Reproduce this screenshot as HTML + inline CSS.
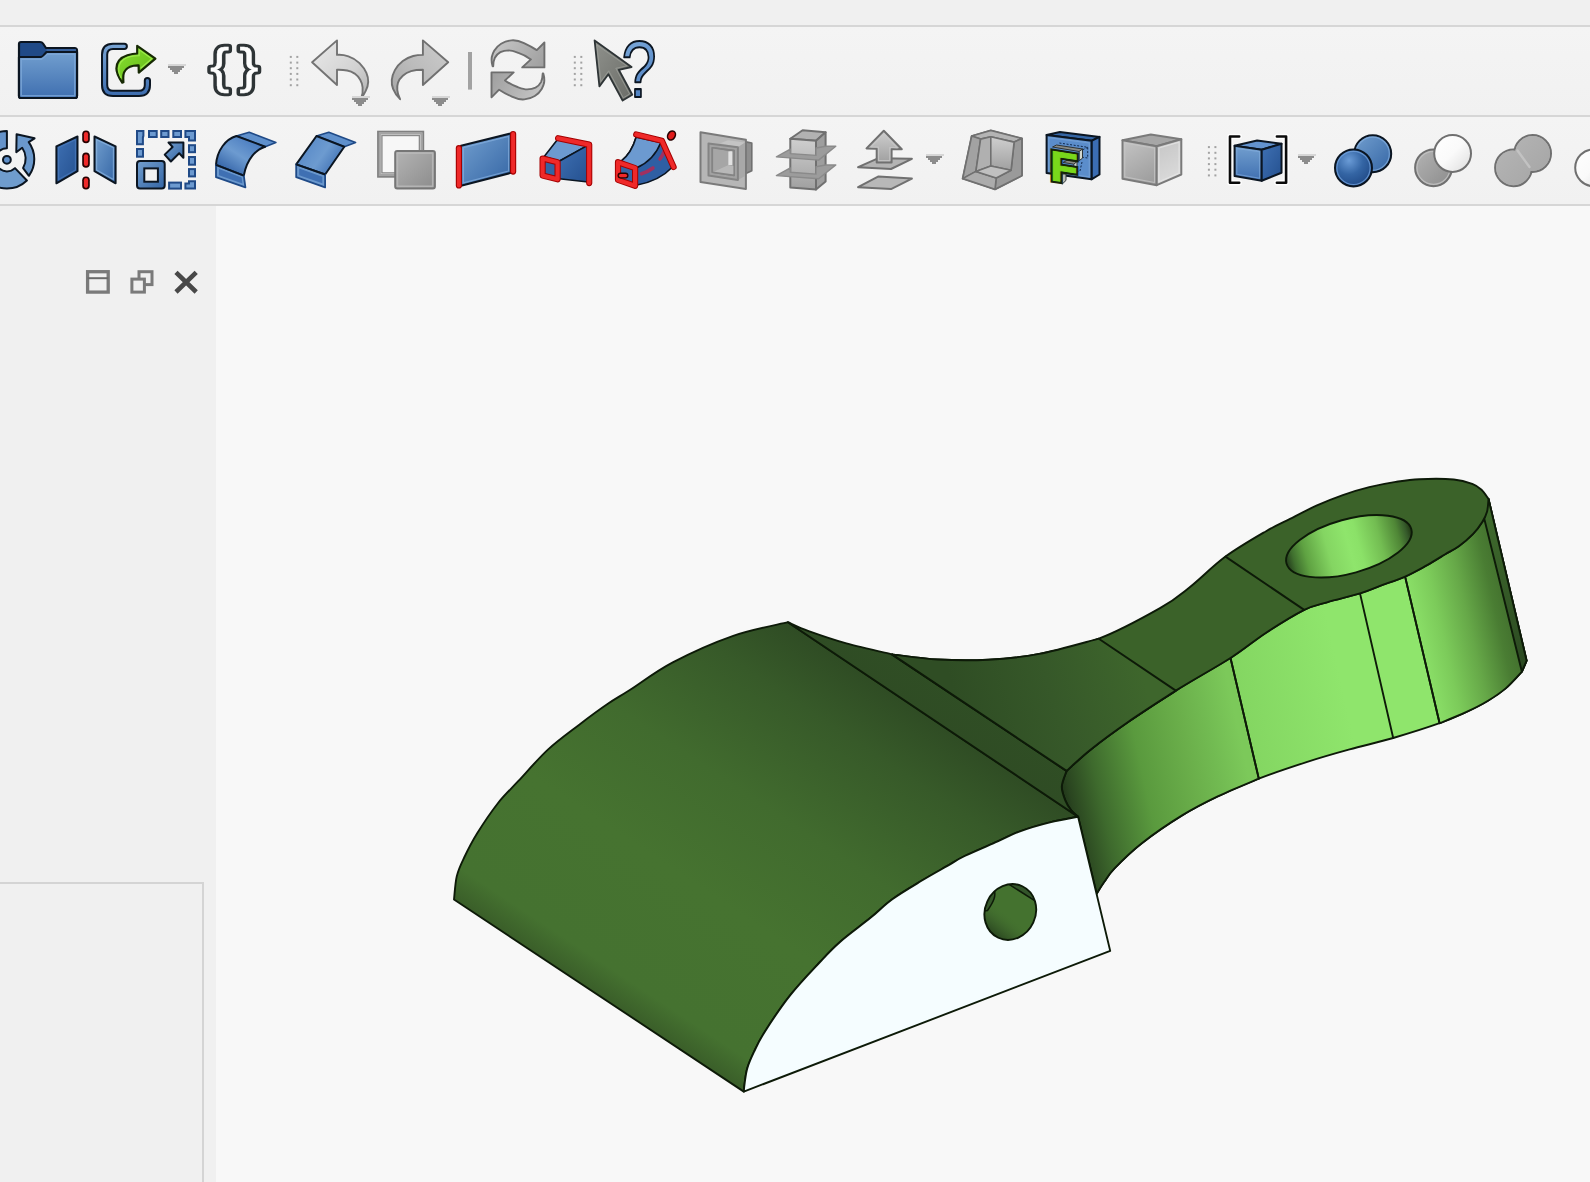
<!DOCTYPE html>
<html><head><meta charset="utf-8"><title>FreeCAD</title>
<style>
html,body{margin:0;padding:0;}
body{width:1590px;height:1182px;overflow:hidden;background:#f0f0f0;position:relative;font-family:"Liberation Sans",sans-serif;}
.abs{position:absolute;}
.hl{position:absolute;left:0;width:1590px;height:2px;background:#d6d6d6;}
#tb1{position:absolute;left:0;top:27px;width:1590px;height:88px;background:linear-gradient(#f4f4f4,#f1f1f1);}
#tb2{position:absolute;left:0;top:117px;width:1590px;height:87px;background:linear-gradient(#f4f4f4,#f1f1f1);}
#view{position:absolute;left:216px;top:206px;width:1374px;height:976px;background:#f8f8f8;}
#panel{position:absolute;left:0;top:206px;width:216px;height:976px;background:#f0f0f0;}
#box{position:absolute;left:-2px;top:882px;width:206px;height:320px;border:2px solid #d4d4d4;box-sizing:border-box;background:#f0f0f0;}
svg{position:absolute;overflow:visible;}
.ic{position:absolute;width:64px;height:64px;}
</style></head>
<body>
<div class="hl" style="top:25px"></div>
<div id="tb1"></div>
<div class="hl" style="top:115px"></div>
<div id="tb2"></div>
<div class="hl" style="top:204px"></div>
<div id="panel"></div>
<div id="box"></div>
<div id="view"></div>
<svg width="1590" height="1182" viewBox="0 0 1590 1182" style="left:0;top:0">
<defs>
<linearGradient id="gbig" gradientUnits="userSpaceOnUse" x1="600" y1="996" x2="830.1" y2="649.9">
<stop offset="0" stop-color="#3a5e29"/><stop offset="0.07" stop-color="#457230"/><stop offset="0.35" stop-color="#467330"/><stop offset="0.6" stop-color="#416b2e"/><stop offset="0.85" stop-color="#375a29"/><stop offset="1" stop-color="#2f4c24"/></linearGradient>
<linearGradient id="gstrip" gradientUnits="userSpaceOnUse" x1="900" y1="700" x2="930" y2="655">
<stop offset="0" stop-color="#2f4c24"/><stop offset="1" stop-color="#304f25"/></linearGradient>
<linearGradient id="garm" gradientUnits="userSpaceOnUse" x1="960" y1="715" x2="1140" y2="665">
<stop offset="0" stop-color="#2f4d24"/><stop offset="0.5" stop-color="#365829"/><stop offset="1" stop-color="#3e662c"/></linearGradient>
<linearGradient id="gside1" gradientUnits="userSpaceOnUse" x1="1062" y1="800" x2="1245" y2="760">
<stop offset="0" stop-color="#1f3318"/><stop offset="0.05" stop-color="#2a4520"/><stop offset="0.2" stop-color="#3e6a2d"/><stop offset="0.45" stop-color="#5a9a3e"/><stop offset="0.7" stop-color="#6aae4a"/><stop offset="0.85" stop-color="#72bb52"/><stop offset="1" stop-color="#7cc95a"/></linearGradient>
<linearGradient id="gside2" gradientUnits="userSpaceOnUse" x1="1232" y1="700" x2="1340" y2="676"><stop offset="0" stop-color="#83d561"/><stop offset="1" stop-color="#8fe56c"/></linearGradient>
<linearGradient id="gside3" gradientUnits="userSpaceOnUse" x1="1415" y1="640" x2="1525" y2="615">
<stop offset="0" stop-color="#8de36a"/><stop offset="0.25" stop-color="#7ccb5a"/><stop offset="0.5" stop-color="#66a848"/><stop offset="0.75" stop-color="#4a7d33"/><stop offset="1" stop-color="#3c6529"/></linearGradient>
<linearGradient id="ghole" gradientUnits="userSpaceOnUse" x1="1286" y1="546" x2="1412" y2="546">
<stop offset="0" stop-color="#2a4720"/><stop offset="0.05" stop-color="#3f6f2e"/><stop offset="0.15" stop-color="#5fa242"/><stop offset="0.33" stop-color="#84d562"/><stop offset="0.5" stop-color="#8fe56c"/><stop offset="0.58" stop-color="#8be168"/><stop offset="0.75" stop-color="#73bd52"/><stop offset="0.9" stop-color="#4f8636"/><stop offset="0.97" stop-color="#35592a"/><stop offset="1" stop-color="#264019"/></linearGradient>
<linearGradient id="gsliver" gradientUnits="userSpaceOnUse" x1="1490" y1="510" x2="1524" y2="665"><stop offset="0" stop-color="#3f6b2d"/><stop offset="1" stop-color="#2c4a22"/></linearGradient>
<linearGradient id="ghole2" gradientUnits="userSpaceOnUse" x1="992" y1="934" x2="1008" y2="914">
<stop offset="0" stop-color="#2a4620"/><stop offset="0.5" stop-color="#3a602a" stop-opacity="0.7"/><stop offset="1" stop-color="#44722f" stop-opacity="0"/></linearGradient>
</defs>
<path d="M1066.6 770.9 C1070.6 767.3 1080.4 757.6 1090.8 749.4 C1101.2 741.2 1114.6 731.3 1128.8 721.5 C1143.0 711.7 1158.8 701.2 1175.8 690.6 C1192.8 680.0 1215.5 667.6 1230.5 658.0 C1245.5 648.4 1253.8 640.7 1266.1 632.7 C1278.4 624.7 1294.0 615.0 1304.2 609.9 C1314.4 604.8 1317.7 605.0 1327.0 602.3 C1336.3 599.5 1351.2 596.1 1360.0 593.4 C1368.8 590.7 1372.5 588.7 1380.0 585.9 C1387.5 583.1 1397.3 580.0 1405.1 576.6 C1412.9 573.2 1419.9 569.1 1426.6 565.4 C1433.3 561.7 1439.8 557.5 1445.2 554.2 C1450.6 551.0 1454.4 549.3 1459.1 545.9 C1463.8 542.5 1469.2 537.8 1473.1 533.8 C1477.0 529.8 1480.1 525.4 1482.4 521.7 C1484.7 518.0 1486.1 515.2 1487.1 511.4 C1488.1 507.6 1488.3 501.1 1488.5 499.0 L1526.6 660.7 L1521.9 671.7 C1519.2 674.5 1511.4 683.5 1505.7 688.4 C1500.0 693.2 1494.6 696.8 1488.0 700.8 C1481.4 704.8 1474.1 708.5 1466.0 712.2 C1457.9 715.9 1451.7 718.9 1439.6 723.2 C1427.5 727.5 1408.2 733.6 1393.2 738.0 C1378.2 742.4 1364.0 745.4 1349.6 749.4 C1335.1 753.4 1321.6 757.2 1306.5 762.1 C1291.4 767.0 1273.6 772.9 1258.8 778.6 C1244.0 784.3 1230.5 790.3 1217.7 796.4 C1204.9 802.5 1194.8 807.6 1182.1 815.4 C1169.4 823.2 1152.8 834.6 1141.5 843.4 C1130.2 852.2 1120.7 861.9 1114.5 868.3 C1108.3 874.7 1107.3 877.6 1104.3 881.8 C1101.3 886.0 1098.0 891.7 1096.7 893.7 L1078.1 816.7 C1076.9 815.6 1073.1 812.7 1071.0 810.0 C1068.9 807.3 1066.9 804.5 1065.4 800.6 C1063.9 796.7 1061.6 791.5 1061.8 786.5 C1062.0 781.5 1065.8 773.5 1066.6 770.9Z" fill="url(#gside2)" stroke="#0d1a08" stroke-width="1.9" stroke-linejoin="round" stroke-linecap="round"/>
<path d="M1066.6 770.9 C1070.6 767.3 1080.4 757.6 1090.8 749.4 C1101.2 741.2 1114.6 731.3 1128.8 721.5 C1143.0 711.7 1158.8 701.2 1175.8 690.6 C1192.8 680.0 1221.4 663.4 1230.5 658.0 L1258.8 778.6 C1252.0 781.6 1230.5 790.3 1217.7 796.4 C1204.9 802.5 1194.8 807.6 1182.1 815.4 C1169.4 823.2 1152.8 834.6 1141.5 843.4 C1130.2 852.2 1120.7 861.9 1114.5 868.3 C1108.3 874.7 1107.3 877.6 1104.3 881.8 C1101.3 886.0 1098.0 891.7 1096.7 893.7 L1078.1 816.7 C1076.9 815.6 1073.1 812.7 1071.0 810.0 C1068.9 807.3 1066.9 804.5 1065.4 800.6 C1063.9 796.7 1061.6 791.5 1061.8 786.5 C1062.0 781.5 1065.8 773.5 1066.6 770.9Z" fill="url(#gside1)" stroke="#0d1a08" stroke-width="1.9" stroke-linejoin="round" stroke-linecap="round"/>
<path d="M1405.1 576.6 C1408.7 574.7 1419.9 569.1 1426.6 565.4 C1433.3 561.7 1439.8 557.5 1445.2 554.2 C1450.6 551.0 1454.4 549.3 1459.1 545.9 C1463.8 542.5 1469.2 537.8 1473.1 533.8 C1477.0 529.8 1480.1 525.4 1482.4 521.7 C1484.7 518.0 1486.1 515.2 1487.1 511.4 C1488.1 507.6 1488.3 501.1 1488.5 499.0 L1526.6 660.7 L1521.9 671.7 C1519.2 674.5 1511.4 683.5 1505.7 688.4 C1500.0 693.2 1494.6 696.8 1488.0 700.8 C1481.4 704.8 1474.1 708.5 1466.0 712.2 C1457.9 715.9 1444.0 721.4 1439.6 723.2Z" fill="url(#gside3)" stroke="#0d1a08" stroke-width="1.9" stroke-linejoin="round" stroke-linecap="round"/>
<path d="M1488.5 499.0L1526.6 660.7L1521.9 671.7L1484.2 518.6Z" fill="url(#gsliver)" stroke="#0d1a08" stroke-width="1.9" stroke-linejoin="round" stroke-linecap="round"/>
<path d="M1230.5 658.0L1258.8 778.6" fill="none" stroke="#0d1a08" stroke-width="1.9" stroke-linejoin="round" stroke-linecap="round"/>
<path d="M1360.0 593.4L1393.2 738.0" fill="none" stroke="#0d1a08" stroke-width="1.9" stroke-linejoin="round" stroke-linecap="round"/>
<path d="M1405.1 576.6L1439.6 723.2" fill="none" stroke="#0d1a08" stroke-width="1.9" stroke-linejoin="round" stroke-linecap="round"/>
<path d="M454.0 899.5 C454.5 895.6 455.1 883.1 456.8 876.1 C458.5 869.1 460.8 864.6 464.2 857.5 C467.6 850.4 471.6 842.3 477.2 833.3 C482.8 824.3 490.9 812.2 497.7 803.5 C504.5 794.8 509.8 790.2 518.2 781.2 C526.6 772.2 537.7 759.1 547.9 749.6 C558.1 740.1 569.7 732.0 579.6 724.4 C589.5 716.8 599.1 709.7 607.5 704.0 C615.9 698.3 618.9 697.0 629.8 690.0 C640.7 683.0 655.6 671.3 672.8 662.3 C690.0 653.3 714.0 642.5 733.2 635.8 C752.4 629.1 778.8 624.5 787.9 622.2 L1078.1 816.7 C1073.4 817.6 1059.7 819.9 1050.0 822.3 C1040.3 824.7 1028.7 828.1 1020.0 831.3 C1011.3 834.5 1006.9 837.3 997.7 841.4 C988.5 845.5 973.2 851.9 964.7 856.0 C956.2 860.1 954.1 862.1 946.9 866.2 C939.7 870.3 930.6 875.3 921.5 880.8 C912.4 886.3 900.8 893.1 892.3 899.2 C883.8 905.3 879.5 910.5 870.8 917.6 C862.1 924.7 848.8 934.3 840.3 941.7 C831.8 949.1 828.3 953.1 820.0 962.0 C811.7 970.9 799.5 983.5 790.3 995.1 C781.1 1006.7 771.0 1022.0 765.0 1031.4 C759.0 1040.8 757.0 1045.6 754.1 1051.7 C751.2 1057.8 749.0 1062.7 747.4 1067.9 C745.8 1073.1 745.3 1078.8 744.7 1082.8 C744.1 1086.8 743.9 1090.1 743.8 1091.6Z" fill="url(#gbig)" stroke="#0d1a08" stroke-width="1.9" stroke-linejoin="round" stroke-linecap="round"/>
<path d="M787.9 622.2 C791.4 623.7 799.0 627.6 808.7 631.1 C818.5 634.6 832.5 639.5 846.4 643.4 C860.3 647.3 884.4 652.6 892.0 654.4 L1066.6 770.9 C1065.8 773.5 1062.0 781.5 1061.8 786.5 C1061.6 791.5 1063.9 796.7 1065.4 800.6 C1066.9 804.5 1068.9 807.3 1071.0 810.0 C1073.1 812.7 1076.9 815.6 1078.1 816.7Z" fill="url(#gstrip)" stroke="#0d1a08" stroke-width="1.9" stroke-linejoin="round" stroke-linecap="round"/>
<path d="M892.0 654.4 C899.6 655.2 921.6 658.6 937.7 659.5 C953.8 660.4 971.5 660.6 988.4 659.7 C1005.3 658.8 1020.8 657.4 1039.2 653.9 C1057.6 650.4 1078.7 646.3 1098.8 638.7 C1118.9 631.1 1144.8 616.8 1160.0 608.2 C1175.2 599.6 1179.1 595.6 1190.0 587.0 C1200.9 578.4 1212.8 565.9 1225.5 556.6 C1238.2 547.3 1255.3 537.5 1266.1 531.2 C1276.8 524.9 1281.6 523.1 1290.0 518.9 C1298.4 514.6 1307.6 509.7 1316.4 505.7 C1325.2 501.7 1334.0 498.2 1342.8 495.1 C1351.6 492.0 1360.4 489.4 1369.2 487.2 C1378.0 485.0 1387.3 483.2 1395.7 481.9 C1404.1 480.6 1409.7 479.6 1419.4 479.2 C1429.1 478.8 1445.0 478.7 1453.8 479.5 C1462.6 480.3 1467.7 482.2 1472.3 483.9 C1476.9 485.6 1478.8 487.3 1481.5 489.8 C1484.2 492.3 1487.3 497.5 1488.5 499.0 C1488.3 501.1 1488.1 507.6 1487.1 511.4 C1486.1 515.2 1484.7 518.0 1482.4 521.7 C1480.1 525.4 1477.0 529.8 1473.1 533.8 C1469.2 537.8 1463.8 542.5 1459.1 545.9 C1454.4 549.3 1450.6 551.0 1445.2 554.2 C1439.8 557.5 1433.3 561.7 1426.6 565.4 C1419.9 569.1 1412.9 573.2 1405.1 576.6 C1397.3 580.0 1387.5 583.1 1380.0 585.9 C1372.5 588.7 1368.8 590.7 1360.0 593.4 C1351.2 596.1 1336.3 599.5 1327.0 602.3 C1317.7 605.0 1314.4 604.8 1304.2 609.9 C1294.0 615.0 1278.4 624.7 1266.1 632.7 C1253.8 640.7 1245.5 648.4 1230.5 658.0 C1215.5 667.6 1192.8 680.0 1175.8 690.6 C1158.8 701.2 1143.0 711.7 1128.8 721.5 C1114.6 731.3 1101.2 741.2 1090.8 749.4 C1080.4 757.6 1070.6 767.3 1066.6 770.9Z" fill="#3b6229" stroke="#0d1a08" stroke-width="1.9" stroke-linejoin="round" stroke-linecap="round"/>
<path d="M892.0 654.4 C899.6 655.2 921.6 658.6 937.7 659.5 C953.8 660.4 971.5 660.6 988.4 659.7 C1005.3 658.8 1020.8 657.4 1039.2 653.9 C1057.6 650.4 1088.9 641.2 1098.8 638.7 L1175.8 690.6 C1168.0 695.8 1143.0 711.7 1128.8 721.5 C1114.6 731.3 1101.2 741.2 1090.8 749.4 C1080.4 757.6 1070.6 767.3 1066.6 770.9Z" fill="url(#garm)" stroke="#0d1a08" stroke-width="1.9" stroke-linejoin="round" stroke-linecap="round"/>
<path d="M1225.5 556.6L1304.2 609.9" fill="none" stroke="#0d1a08" stroke-width="1.9" stroke-linejoin="round" stroke-linecap="round"/>
<ellipse cx="1348.9" cy="546.3" rx="64.7" ry="27" transform="rotate(-15.4 1348.9 546.3)" fill="url(#ghole)" stroke="#0d1a08" stroke-width="1.9" stroke-linejoin="round" stroke-linecap="round"/>
<path d="M743.8 1091.6 C743.9 1090.1 744.1 1086.8 744.7 1082.8 C745.3 1078.8 745.8 1073.1 747.4 1067.9 C749.0 1062.7 751.2 1057.8 754.1 1051.7 C757.0 1045.6 759.0 1040.8 765.0 1031.4 C771.0 1022.0 781.1 1006.7 790.3 995.1 C799.5 983.5 811.7 970.9 820.0 962.0 C828.3 953.1 831.8 949.1 840.3 941.7 C848.8 934.3 862.1 924.7 870.8 917.6 C879.5 910.5 883.8 905.3 892.3 899.2 C900.8 893.1 912.4 886.3 921.5 880.8 C930.6 875.3 939.7 870.3 946.9 866.2 C954.1 862.1 956.2 860.1 964.7 856.0 C973.2 851.9 988.5 845.5 997.7 841.4 C1006.9 837.3 1011.3 834.5 1020.0 831.3 C1028.7 828.1 1040.3 824.7 1050.0 822.3 C1059.7 819.9 1073.4 817.6 1078.1 816.7 L1110.2 950.9Z" fill="#f5fdff" stroke="#0d1a08" stroke-width="1.9" stroke-linejoin="round" stroke-linecap="round"/>
<defs><clipPath id="ch2"><ellipse cx="1010.3" cy="912" rx="25.3" ry="28.4" transform="rotate(25 1010.3 912)"/></clipPath></defs>
<ellipse cx="1010.3" cy="912" rx="25.3" ry="28.4" transform="rotate(25 1010.3 912)" fill="#44722f"/>
<g clip-path="url(#ch2)">
<rect x="980" y="880" width="60" height="64" fill="url(#ghole2)"/>
<path d="M994.3 890 C996 896 994 901 987.5 910.5 L975 912 L980 880Z" fill="#35582a" stroke="#0d1a08" stroke-width="1.5"/>
<path d="M1009.5 884.6 L1035.5 901.2 L1045 880 L1012 872Z" fill="#33552a" stroke="#0d1a08" stroke-width="1.5"/>
</g>
<ellipse cx="1010.3" cy="912" rx="25.3" ry="28.4" transform="rotate(25 1010.3 912)" fill="none" stroke="#0d1a08" stroke-width="1.9" stroke-linejoin="round" stroke-linecap="round"/>
</svg>
<svg width="1590" height="1182" viewBox="0 0 1590 1182" style="left:0;top:0">
<defs>
<linearGradient id="bv" x1="0" y1="0" x2="0" y2="1"><stop offset="0" stop-color="#729fcf"/><stop offset="1" stop-color="#3f6fb0"/></linearGradient>
<linearGradient id="bd" x1="0" y1="0" x2="1" y2="1"><stop offset="0" stop-color="#729fcf"/><stop offset="1" stop-color="#3465a4"/></linearGradient>
<linearGradient id="bdd" x1="0" y1="0" x2="1" y2="1"><stop offset="0" stop-color="#3f71b4"/><stop offset="1" stop-color="#24508f"/></linearGradient>
<linearGradient id="gv" x1="0" y1="0" x2="0" y2="1"><stop offset="0" stop-color="#cfcfcf"/><stop offset="1" stop-color="#a0a0a0"/></linearGradient>
<linearGradient id="gd" x1="0" y1="0" x2="1" y2="1"><stop offset="0" stop-color="#b4b4b4"/><stop offset="1" stop-color="#8c8c8c"/></linearGradient>
<linearGradient id="gl" x1="0" y1="0" x2="1" y2="1"><stop offset="0" stop-color="#e6e6e6"/><stop offset="1" stop-color="#c2c2c2"/></linearGradient>
<linearGradient id="gw" x1="0" y1="0" x2="1" y2="1"><stop offset="0" stop-color="#ffffff"/><stop offset="0.5" stop-color="#fafafa"/><stop offset="1" stop-color="#dcdcdc"/></linearGradient>
<linearGradient id="grn" x1="0" y1="0" x2="1" y2="1"><stop offset="0" stop-color="#8ae234"/><stop offset="1" stop-color="#5fb512"/></linearGradient>
<linearGradient id="red" x1="0" y1="0" x2="1" y2="0"><stop offset="0" stop-color="#ef2929"/><stop offset="1" stop-color="#d81313"/></linearGradient>
<radialGradient id="sph" cx="0.38" cy="0.3" r="0.75"><stop offset="0" stop-color="#6a9bd6"/><stop offset="0.5" stop-color="#3465a4"/><stop offset="1" stop-color="#1f4885"/></radialGradient>
<linearGradient id="cur" x1="0" y1="0" x2="1" y2="1"><stop offset="0" stop-color="#8f918c"/><stop offset="1" stop-color="#6a6c67"/></linearGradient>
</defs>
<g transform="translate(16,38)">
<path d="M3 6 Q3 4 5 4 L24 4 Q26 4 27 5.5 L30 10 L58.5 10 Q61 10 61 12.5 L61 58 Q61 60 59 60 L5 60 Q3 60 3 58Z" fill="#204a87" stroke="#0b1521" stroke-width="2.2" stroke-linejoin="round"/>
<path d="M3 19 L24.5 19 Q26 19 27 18 L30.5 14 L61 14 L61 58 Q61 60 59 60 L5 60 Q3 60 3 58Z" fill="url(#bv)" stroke="#0b1521" stroke-width="2.2" stroke-linejoin="round"/>
<path d="M5.2 21.2 L25.5 21.2 L31.3 16.2 L58.8 16.2 L58.8 57.8 L5.2 57.8Z" fill="none" stroke="#7fa9da" stroke-width="1.6" opacity="0.75"/>
<path d="M30.5 12 L60 12" stroke="#3f68a3" stroke-width="1.6"/>
</g>
<path d="M124.3 46.3 L113 46.3 Q104.6 46.3 104.6 54.7 L104.6 84.9 Q104.6 93.3 113 93.3 L139 93.3 Q147.4 93.3 147.4 84.9 L147.4 80.6" fill="none" stroke="#0b1521" stroke-width="7.2" stroke-linecap="round"/>
<path d="M124.3 46.3 L113 46.3 Q104.6 46.3 104.6 54.7 L104.6 84.9 Q104.6 93.3 113 93.3 L139 93.3 Q147.4 93.3 147.4 84.9 L147.4 80.6" fill="none" stroke="url(#bvu)" stroke-width="3.2" stroke-linecap="round"/>
<defs><linearGradient id="bvu" gradientUnits="userSpaceOnUse" x1="0" y1="44" x2="0" y2="96"><stop offset="0" stop-color="#78a4d4"/><stop offset="1" stop-color="#3c6cae"/></linearGradient></defs>
<path d="M122.2 82.6 C118.5 77 116.3 73 116.4 68.5 C116.6 62 120.5 57.5 127.4 55.3 C131 54.2 134 53.6 137.2 53.5 L137.2 45.8 L155.4 58.7 L138.8 72.6 L138.6 65.4 C135 65.3 132.5 65.7 130 66.8 C126 68.6 124 71 123.4 75 C123.1 77.5 123.3 80 123.4 82.2Z" fill="url(#grn)" stroke="#172a04" stroke-width="2.2" stroke-linejoin="round"/>
<path d="M121 78 C118.6 73.5 118.2 69.5 119.2 65.5 C120.6 61 124.5 58 130 56.6 C133 55.9 136 55.6 139.2 55.6 L139.2 49.8 L151.8 58.7 L140.6 68.2" fill="none" stroke="#a5ef55" stroke-width="1.2" opacity="0.8"/>
<rect x="168" y="64" width="18" height="2" fill="#d6d6d6"/><rect x="168" y="66" width="16" height="2" fill="#8c8c8c"/><rect x="170" y="68" width="12" height="2" fill="#8c8c8c"/><rect x="172" y="70" width="8" height="2" fill="#8c8c8c"/><rect x="174" y="72" width="4" height="2" fill="#8c8c8c"/>
<g font-family="Liberation Sans, sans-serif" font-size="58" text-anchor="middle" transform="translate(0,6.12) scale(1,0.8675)"><title>{}</title>
<text x="219.6" y="88.6" fill="#2e3436" stroke="#2e3436" stroke-width="7.4" stroke-linejoin="round">{</text>
<text x="248.9" y="88.6" fill="#2e3436" stroke="#2e3436" stroke-width="7.4" stroke-linejoin="round">}</text>
<text x="219.6" y="88.6" fill="#fdfdfd" stroke="#fdfdfd" stroke-width="0.4">{</text>
<text x="248.9" y="88.6" fill="#fdfdfd" stroke="#fdfdfd" stroke-width="0.4">}</text>
</g>
<rect x="289.8" y="55.9" width="2" height="2" fill="#a2a2a2"/><rect x="296.3" y="55.9" width="2" height="2" fill="#a2a2a2"/><rect x="289.8" y="61.6" width="2" height="2" fill="#a2a2a2"/><rect x="296.3" y="61.6" width="2" height="2" fill="#a2a2a2"/><rect x="289.8" y="67.2" width="2" height="2" fill="#a2a2a2"/><rect x="296.3" y="67.2" width="2" height="2" fill="#a2a2a2"/><rect x="289.8" y="72.9" width="2" height="2" fill="#a2a2a2"/><rect x="296.3" y="72.9" width="2" height="2" fill="#a2a2a2"/><rect x="289.8" y="78.5" width="2" height="2" fill="#a2a2a2"/><rect x="296.3" y="78.5" width="2" height="2" fill="#a2a2a2"/><rect x="289.8" y="84.2" width="2" height="2" fill="#a2a2a2"/><rect x="296.3" y="84.2" width="2" height="2" fill="#a2a2a2"/>
<path d="M312.1 62.2 L337 40.4 L337 54.9 C341 54.6 345 55.2 348.4 56.3 C353 57.8 356.6 60.2 359.5 63.2 C362.6 66.4 365 69.6 366.4 72.9 C367.8 76.2 368.3 79 368.2 81.9 C368.1 85 367.2 88 365.7 90.9 C364.5 93.5 363 96 361.2 98.2 C362.6 94.5 363 91 362.6 87.4 C362.3 84.5 361.6 82.2 360.2 79.8 C358.8 77.4 357 75.3 354.7 73.6 C352.4 72 350 71 347.1 70.5 C344 69.9 340.5 69.7 337 69.8 L337 85Z" fill="url(#ugr)" stroke="#737373" stroke-width="1.9" stroke-linejoin="round"/>
<defs><linearGradient id="ugr" gradientUnits="userSpaceOnUse" x1="320" y1="45" x2="368" y2="95"><stop offset="0" stop-color="#e6e6e6"/><stop offset="0.6" stop-color="#d2d2d2"/><stop offset="1" stop-color="#b4b4b4"/></linearGradient><linearGradient id="rgr" gradientUnits="userSpaceOnUse" x1="392" y1="95" x2="445" y2="45"><stop offset="0" stop-color="#a8a8a8"/><stop offset="0.5" stop-color="#bcbcbc"/><stop offset="1" stop-color="#cacaca"/></linearGradient></defs>
<rect x="352" y="96" width="18" height="2" fill="#d6d6d6"/><rect x="352" y="98" width="16" height="2" fill="#8c8c8c"/><rect x="354" y="100" width="12" height="2" fill="#8c8c8c"/><rect x="356" y="102" width="8" height="2" fill="#8c8c8c"/><rect x="358" y="104" width="4" height="2" fill="#8c8c8c"/>
<path d="M448.2 62.2 L422.9 40.4 L422.9 54.9 C419.5 54.9 416.2 55.2 413.2 56 C409.2 57 405.8 58.8 402.8 61.1 C399.4 63.8 396.8 66.6 394.9 70.1 C393.2 73.2 392.1 76.4 391.8 79.8 C391.5 83 392 86 393.1 88.8 C394.6 92.6 397 96 400.1 99.2 C398.4 96 397.6 93.2 397.3 90.2 C397 87.5 397.2 85 398 82.6 C398.9 80 400.5 77.8 402.8 75.7 C405.2 73.6 407.9 72.2 411.1 71.2 C414.7 70.1 418.6 69.8 422.9 69.8 L422.9 85Z" fill="url(#rgr)" stroke="#707070" stroke-width="1.9" stroke-linejoin="round"/>
<rect x="432" y="96" width="18" height="2" fill="#d6d6d6"/><rect x="432" y="98" width="16" height="2" fill="#8c8c8c"/><rect x="434" y="100" width="12" height="2" fill="#8c8c8c"/><rect x="436" y="102" width="8" height="2" fill="#8c8c8c"/><rect x="438" y="104" width="4" height="2" fill="#8c8c8c"/>
<rect x="468" y="52" width="4" height="37.6" fill="#a2a2a2"/>
<path d="M492.6 66.3 C491.4 62.5 491.4 59.8 491.8 57 C492.3 54.5 493.1 52.7 494.2 50.8 C495.8 48 498.2 45.6 501.1 43.8 C504.2 41.9 507.6 40.7 511.5 40.4 C515.8 40 520 41.2 524 43.1 C528.5 45.2 532.8 47.5 536.8 50.1 L544.4 42.5 L544.4 67.4 L522.2 67.4 L530.9 59.4 C527 56.5 523 54.3 518.4 52.8 C515.2 51.7 512 50.5 508.8 50.4 C505.8 50.4 503 50.8 500.4 52.1 C498 53.4 496.2 55.3 494.9 57.7 C493.7 60.2 493.3 63 493.2 66.3Z" fill="url(#fgr)" stroke="#6e6e6e" stroke-width="1.9" stroke-linejoin="round"/>
<path d="M492.6 66.3 C491.4 62.5 491.4 59.8 491.8 57 C492.3 54.5 493.1 52.7 494.2 50.8 C495.8 48 498.2 45.6 501.1 43.8 C504.2 41.9 507.6 40.7 511.5 40.4 C515.8 40 520 41.2 524 43.1 C528.5 45.2 532.8 47.5 536.8 50.1 L544.4 42.5 L544.4 67.4 L522.2 67.4 L530.9 59.4 C527 56.5 523 54.3 518.4 52.8 C515.2 51.7 512 50.5 508.8 50.4 C505.8 50.4 503 50.8 500.4 52.1 C498 53.4 496.2 55.3 494.9 57.7 C493.7 60.2 493.3 63 493.2 66.3Z" fill="url(#fgr)" stroke="#6e6e6e" stroke-width="1.9" stroke-linejoin="round" transform="rotate(180 517.95 69.9)"/>
<defs><linearGradient id="fgr" gradientUnits="userSpaceOnUse" x1="495" y1="42" x2="540" y2="70"><stop offset="0" stop-color="#c6c6c6"/><stop offset="1" stop-color="#a0a0a0"/></linearGradient></defs>
<rect x="573.8" y="55.9" width="2" height="2" fill="#a2a2a2"/><rect x="580.3" y="55.9" width="2" height="2" fill="#a2a2a2"/><rect x="573.8" y="61.6" width="2" height="2" fill="#a2a2a2"/><rect x="580.3" y="61.6" width="2" height="2" fill="#a2a2a2"/><rect x="573.8" y="67.2" width="2" height="2" fill="#a2a2a2"/><rect x="580.3" y="67.2" width="2" height="2" fill="#a2a2a2"/><rect x="573.8" y="72.9" width="2" height="2" fill="#a2a2a2"/><rect x="580.3" y="72.9" width="2" height="2" fill="#a2a2a2"/><rect x="573.8" y="78.5" width="2" height="2" fill="#a2a2a2"/><rect x="580.3" y="78.5" width="2" height="2" fill="#a2a2a2"/><rect x="573.8" y="84.2" width="2" height="2" fill="#a2a2a2"/><rect x="580.3" y="84.2" width="2" height="2" fill="#a2a2a2"/>
<path d="M594.6 40.4 L599.4 86.4 L608.4 74.3 L622.6 100.6 L632.3 94.7 L618.8 69.8 L631.6 67.0Z" fill="url(#cur)" stroke="#2e3436" stroke-width="1.8" stroke-linejoin="round"/>
<path d="M596.8 45 L600.9 81.5 L608.7 70.8 L623.3 97.8 L629.6 94 L615.8 68.3 L626.8 65.9Z" fill="none" stroke="#a0a29d" stroke-width="1" opacity="0.7"/>
<g font-family="Liberation Sans, sans-serif" font-size="65.5" text-anchor="middle" transform="translate(639.1,97.3) scale(0.96,1.215)"><title>?</title>
<text x="0" y="0" fill="url(#qgr)" stroke="#0b1521" stroke-width="1.8" stroke-linejoin="round">?</text>
</g>
<defs><linearGradient id="qgr" gradientUnits="userSpaceOnUse" x1="-12" y1="-45" x2="12" y2="0"><stop offset="0" stop-color="#78a6d8"/><stop offset="1" stop-color="#4a7dc0"/></linearGradient></defs>
<path d="M15.0 168.1 L26.9 180.5 A28.8 28.8 0 0 1 -13.1 180.5 L-1.2 168.1 A11.6 11.6 0 0 0 15.0 168.1 Z" fill="#6f9ccd" stroke="#0b1521" stroke-width="2" stroke-linejoin="round"/>
<path d="M-4.4 157.0 L-21.0 152.8 A28.8 28.8 0 0 1 6.9 131.0 L6.9 148.2 A11.6 11.6 0 0 0 -4.4 157.0 Z" fill="#6593ca" stroke="#0b1521" stroke-width="2" stroke-linejoin="round"/>
<circle cx="6.9" cy="159.8" r="3.9" fill="#5f8fc9" stroke="#0b1521" stroke-width="2"/>
<path d="M23.1 168.1 A19 19 0 0 0 22.2 147.7 L16.3 152.2 L16.6 134.2 L34.6 138.3 L28.7 142.2 A28.5 28.5 0 0 1 28.9 175.8 Z" fill="#6a98cc" stroke="#0b1521" stroke-width="2" stroke-linejoin="round"/>
<path d="M56.4 146.3 L77.5 136.5 L77.5 171.2 L56.4 183.3Z" fill="url(#bdd)" stroke="#0b1521" stroke-width="2" stroke-linejoin="round" />
<path d="M58.6 147.6 L75.4 139.8 L75.4 170.0 L58.6 179.6Z" fill="none" stroke="#4a7abc" stroke-width="1.2" stroke-linejoin="round" opacity="0.7"/>
<path d="M94.5 136.5 L115.6 146.3 L115.6 183.3 L94.5 171.2Z" fill="url(#bd)" stroke="#0b1521" stroke-width="2" stroke-linejoin="round" />
<path d="M96.6 139.8 L113.4 147.6 L113.4 179.6 L96.6 170.0Z" fill="none" stroke="#8fb6e0" stroke-width="1.2" stroke-linejoin="round" opacity="0.7"/>
<path d="M86 134.2 L86 139.4" stroke="#280000" stroke-width="7.6" stroke-linecap="round"/>
<path d="M86 134.2 L86 139.4" stroke="#ef2929" stroke-width="4.2" stroke-linecap="round"/>
<path d="M86 156.3 L86 164" stroke="#280000" stroke-width="7.6" stroke-linecap="round"/>
<path d="M86 156.3 L86 164" stroke="#ef2929" stroke-width="4.2" stroke-linecap="round"/>
<path d="M86 180.2 L86 185.8" stroke="#280000" stroke-width="7.6" stroke-linecap="round"/>
<path d="M86 180.2 L86 185.8" stroke="#ef2929" stroke-width="4.2" stroke-linecap="round"/>
<path d="M136.0 130.0 L144.4 130.0 L144.4 136.0 L143.9 138.0 L143.9 145.3 L136.0 145.3Z" fill="#204a87"/>
<path d="M138.0 132.0 L142.4 132.0 L142.4 135.5 L141.9 137.0 L141.9 143.3 L138.0 143.3Z" fill="#6c9ad0"/>
<rect x="148" y="130" width="9.7" height="8" fill="#204a87"/>
<rect x="150" y="132" width="5.7" height="4" fill="#6c9ad0"/>
<rect x="160.2" y="130" width="9.3" height="8" fill="#204a87"/>
<rect x="162.2" y="132" width="5.3" height="4" fill="#6c9ad0"/>
<rect x="172.3" y="130" width="9.7" height="8" fill="#204a87"/>
<rect x="174.3" y="132" width="5.7" height="4" fill="#6c9ad0"/>
<path d="M184.4 130.0 L196.0 130.0 L196.0 141.5 L188.0 141.5 L188.0 138.0 L184.4 138.0Z" fill="#204a87"/>
<path d="M186.4 132.0 L194.0 132.0 L194.0 139.5 L190.0 139.5 L190.0 136.0 L186.4 136.0Z" fill="#6c9ad0"/>
<rect x="188" y="144.2" width="8" height="9" fill="#204a87"/>
<rect x="190" y="146.2" width="4" height="5" fill="#6c9ad0"/>
<rect x="188" y="156" width="8" height="9.7" fill="#204a87"/>
<rect x="190" y="158" width="4" height="5.7" fill="#6c9ad0"/>
<rect x="188" y="168.1" width="8" height="9.3" fill="#204a87"/>
<rect x="190" y="170.1" width="4" height="5.3" fill="#6c9ad0"/>
<path d="M188.0 180.2 L196.0 180.2 L196.0 189.6 L184.4 189.6 L184.4 182.5 L188.0 182.5Z" fill="#204a87"/>
<path d="M190.0 182.2 L194.0 182.2 L194.0 187.6 L186.4 187.6 L186.4 184.5 L190.0 184.5Z" fill="#6c9ad0"/>
<rect x="168.1" y="181.6" width="13.9" height="8" fill="#204a87"/>
<rect x="170.1" y="183.6" width="9.9" height="4" fill="#6c9ad0"/>
<rect x="136" y="148" width="8" height="9.7" fill="#204a87"/>
<rect x="138" y="150" width="4" height="5.7" fill="#6c9ad0"/>
<rect x="137" y="161.1" width="27.7" height="27.5" rx="3" fill="url(#bd)" stroke="#0b1521" stroke-width="2"/>
<rect x="144.3" y="168.4" width="13.6" height="13.3" fill="#f2f2f2" stroke="#0b1521" stroke-width="2"/>
<path d="M168.5 142.5 L183.4 142.5 L183.4 157.7 L179.2 153.2 L170.9 161.5 L164.7 154.6 L172.6 147.0Z" fill="url(#bd)" stroke="#0b1521" stroke-width="2" stroke-linejoin="round" />
<path d="M236.4 136.0 L249.2 132.3 L275.9 142.5 L265.2 146.7Z" fill="#5f90cc" stroke="#1f4a87" stroke-width="1.6" stroke-linejoin="round" />
<path d="M236.4 136 L265.2 146.7 C257 149 247 158 243.8 175.6 L216 164.9 C217 150 226 139 236.4 136Z" fill="url(#filg)" stroke="#0b1521" stroke-width="2" stroke-linejoin="round"/>
<defs><linearGradient id="filg" gradientUnits="userSpaceOnUse" x1="250" y1="138" x2="228" y2="172"><stop offset="0" stop-color="#4a7cc0"/><stop offset="0.5" stop-color="#6d9bd0"/><stop offset="1" stop-color="#3767aa"/></linearGradient></defs>
<path d="M216.0 164.9 L243.8 175.6 L245.4 187.4 L216.0 177.2Z" fill="#6a98cd" stroke="#1f4a87" stroke-width="1.8" stroke-linejoin="round" />
<path d="M219.0 169.0 L241.6 177.6 L242.4 183.4 L219.0 175.2Z" fill="#3f70b3" stroke="none" stroke-width="0" stroke-linejoin="round" />
<path d="M216 164.9 L243.8 175.6" stroke="#0b1521" stroke-width="2" fill="none"/>
<path d="M316.5 136.0 L328.8 132.3 L355.6 142.5 L344.3 146.7Z" fill="#5f90cc" stroke="#1f4a87" stroke-width="1.6" stroke-linejoin="round" />
<path d="M316.5 136.0 L344.3 146.7 L325.1 174.5 L296.2 164.4Z" fill="url(#chg)" stroke="#0b1521" stroke-width="2" stroke-linejoin="round" />
<defs><linearGradient id="chg" gradientUnits="userSpaceOnUse" x1="305" y1="145" x2="338" y2="168"><stop offset="0" stop-color="#5a8bc8"/><stop offset="0.5" stop-color="#6d9bd0"/><stop offset="1" stop-color="#3f70b3"/></linearGradient></defs>
<path d="M296.2 164.4 L325.1 174.5 L325.1 187.4 L296.2 177.2Z" fill="#6a98cd" stroke="#1f4a87" stroke-width="1.8" stroke-linejoin="round" />
<path d="M299.2 168.6 L322.3 176.8 L322.3 183.2 L299.2 175.2Z" fill="#3f70b3" stroke="none" stroke-width="0" stroke-linejoin="round" />
<path d="M296.2 164.4 L325.1 174.5" stroke="#0b1521" stroke-width="2" fill="none"/>
<rect x="378.1" y="131.7" width="45.1" height="45" fill="#f7f7f7" stroke="#808080" stroke-width="2"/>
<rect x="379.8" y="133.4" width="41.7" height="41.6" fill="none" stroke="#a4a4a4" stroke-width="2.2"/>
<rect x="381.9" y="135.5" width="37.5" height="37.4" fill="none" stroke="#8a8a8a" stroke-width="1.4"/>
<rect x="395.2" y="150.9" width="39.7" height="37.6" rx="2" fill="url(#gd)" stroke="#767676" stroke-width="2"/>
<rect x="397.4" y="153.1" width="35.3" height="33.2" fill="none" stroke="#bcbcbc" stroke-width="1.6" opacity="0.8"/>
<path d="M461.0 145.7 L510.8 133.4 L510.8 172.9 L461.0 185.8Z" fill="url(#bd)" stroke="#0b1521" stroke-width="2" stroke-linejoin="round" />
<path d="M463.4 147.6 L508.6 136.4 L508.6 171.0 L463.4 182.8Z" fill="none" stroke="#86afde" stroke-width="1.2" stroke-linejoin="round" opacity="0.7"/>
<path d="M458.9 148.2 L458.9 185.4" stroke="#a40000" stroke-width="6.2" stroke-linecap="round"/>
<path d="M458.9 148.2 L458.9 185.4" stroke="#ef2929" stroke-width="4" stroke-linecap="round"/>
<path d="M513.1 134 L513.1 171.6" stroke="#a40000" stroke-width="6.2" stroke-linecap="round"/>
<path d="M513.1 134 L513.1 171.6" stroke="#ef2929" stroke-width="4" stroke-linecap="round"/>
<path d="M544.2 156.4 L558.1 138.7 L588.1 145.1 L559.2 161.2Z" fill="#6c9ad0" stroke="#0b1521" stroke-width="1.6" stroke-linejoin="round" />
<path d="M559.2 161.2 L588.1 145.1 L588.1 182.0 L559.2 178.8Z" fill="url(#bdd)" stroke="#0b1521" stroke-width="1.6" stroke-linejoin="round" />
<path d="M542.6 158.5 L557.6 162.2 L557.6 179.3 L542.6 175.6Z" fill="#3465a4"/>
<path d="M558.1 138.2 L589.2 144.6 L589.2 183.1" fill="none" stroke="#a40000" stroke-width="6.2" stroke-linecap="round" stroke-linejoin="round"/>
<path d="M558.1 138.2 L589.2 144.6 L589.2 183.1" fill="none" stroke="#ef2929" stroke-width="4.2" stroke-linecap="round" stroke-linejoin="round"/>
<path d="M542.6 158.5 L557.6 162.2 L557.6 179.3 L542.6 175.6Z" fill="none" stroke="#a40000" stroke-width="6.2" stroke-linecap="round" stroke-linejoin="round"/>
<path d="M542.6 158.5 L557.6 162.2 L557.6 179.3 L542.6 175.6Z" fill="none" stroke="#ef2929" stroke-width="4.2" stroke-linecap="round" stroke-linejoin="round"/>
<path d="M636.2 137.1 L660.8 142.5 L672.5 167 C664 176 652 182.5 636.2 185.2 L621.2 161.2 C628 156 633 148 636.2 137.1Z" fill="#2f5fa3" stroke="#0b1521" stroke-width="1.6" stroke-linejoin="round"/>
<path d="M636.2 137.1 L660.8 142.5 C656 155 648 163 636.2 168.1 L621.2 161.2 C628 156 633 148 636.2 137.1Z" fill="#6c9ad0" stroke="#0b1521" stroke-width="1.6" stroke-linejoin="round"/>
<path d="M660.8 142.5 L672.5 167 C667 160 664 152 660.8 142.5Z" fill="#3f70b3"/>
<path d="M664.5 150.5 C663.5 153.5 662 156.5 660 159" stroke="#a03060" stroke-width="3.6" stroke-linecap="round" fill="none"/>
<path d="M653 168 C650 170.3 646 172.3 641.5 173.8" stroke="#a03060" stroke-width="3.6" stroke-linecap="round" fill="none"/>
<path d="M618.0 162.2 L635.1 168.1 L635.1 185.8 L618.0 179.9Z" fill="#3465a4"/>
<path d="M636.2 134.4 L661.9 140.8 L673.6 167.0" fill="none" stroke="#a40000" stroke-width="6.2" stroke-linecap="round" stroke-linejoin="round"/>
<path d="M636.2 134.4 L661.9 140.8 L673.6 167.0" fill="none" stroke="#ef2929" stroke-width="4.2" stroke-linecap="round" stroke-linejoin="round"/>
<path d="M618.0 162.2 L635.1 168.1 L635.1 185.8 L618.0 179.9Z" fill="none" stroke="#a40000" stroke-width="6.2" stroke-linecap="round" stroke-linejoin="round"/>
<path d="M618.0 162.2 L635.1 168.1 L635.1 185.8 L618.0 179.9Z" fill="none" stroke="#ef2929" stroke-width="4.2" stroke-linecap="round" stroke-linejoin="round"/>
<path d="M620.5 175.6 L625.5 175.6" stroke="#280000" stroke-width="6" stroke-linecap="round"/>
<path d="M620.5 175.6 L625.5 175.6" stroke="#ef2929" stroke-width="3.2" stroke-linecap="round"/>
<ellipse cx="671.5" cy="135.5" rx="3.6" ry="4.8" transform="rotate(30 671.5 135.5)" fill="#e01b1b" stroke="#280000" stroke-width="1.6"/>
<path d="M745.9 141.9 L751.8 143.0 L751.8 170.8 L745.9 173.5Z" fill="#8e8e8e" stroke="#707070" stroke-width="1.6" stroke-linejoin="round" />
<path d="M700.5 132.3 L745.9 139.8 L745.9 189.0 L700.5 182.0Z" fill="#b6b6b6" stroke="#7a7a7a" stroke-width="2" stroke-linejoin="round" />
<path d="M720.3 143.3 L727.8 140.3 L745.0 142.6 L737.9 147.3Z" fill="#c4c4c4" stroke="none" stroke-width="0" stroke-linejoin="round" />
<path d="M737.9 147.3 L745.0 142.6 L745.0 176.0 L737.9 179.9Z" fill="#a8a8a8" stroke="none" stroke-width="0" stroke-linejoin="round" />
<path d="M708.5 143.5 L737.9 147.3 L737.9 179.9 L708.5 175.6Z" fill="#a2a2a2" stroke="#848484" stroke-width="2" stroke-linejoin="round" />
<path d="M712.3 147.8 L734.2 150.6 L734.2 175.4 L712.3 172.2Z" fill="#9c9c9c" stroke="#848484" stroke-width="1.6" stroke-linejoin="round" />
<path d="M712.3 147.8 L728.3 151.5 L728.3 165.0 L712.3 172.2Z" fill="#a6a6a6" stroke="none" stroke-width="0" stroke-linejoin="round" />
<path d="M728.3 151.5 L732.3 151.0 L732.3 164.9 L728.3 165.0Z" fill="#e2e2e2" stroke="none" stroke-width="0" stroke-linejoin="round" />
<path d="M712.3 172.2 L728.3 165.0 L734.2 166.0 L734.2 175.4Z" fill="#b8b8b8" stroke="none" stroke-width="0" stroke-linejoin="round" />
<path d="M712.3 147.8 L734.2 150.6 L734.2 175.4 L712.3 172.2Z" fill="none" stroke="#848484" stroke-width="1.6" stroke-linejoin="round" />
<path d="M790.3 138.7 L802.6 130.2 L825.6 132.3 L816.0 140.8Z" fill="#b2b2b2" stroke="#707070" stroke-width="2" stroke-linejoin="round" />
<path d="M816.0 140.8 L825.6 132.3 L825.6 181.5 L816.0 189.5Z" fill="#9e9e9e" stroke="#707070" stroke-width="2" stroke-linejoin="round" />
<path d="M790.3 138.7 L816.0 140.8 L816.0 189.5 L790.3 187.4Z" fill="url(#gv)" stroke="#707070" stroke-width="2" stroke-linejoin="round" />
<path d="M776.4 156.9 L790.3 149.2 L790.3 153.6 L816.0 155.4 L816.0 148.0 L825.6 146.3 L835.8 146.2 L818.6 160.1Z" fill="#9c9c9c" stroke="#8a8a8a" stroke-width="1.4" stroke-linejoin="round" />
<path d="M776.4 175.6 L790.3 167.9 L790.3 172.3 L816.0 174.1 L816.0 166.7 L825.6 165.0 L835.8 164.9 L818.6 178.8Z" fill="#9c9c9c" stroke="#8a8a8a" stroke-width="1.4" stroke-linejoin="round" />
<path d="M858.1 167.2 L878.5 158.2 L911.9 158.8 L891.0 169.0Z" fill="#b4b4b4" stroke="#707070" stroke-width="2" stroke-linejoin="round" />
<path d="M883.8 130.8 L866.5 148.4 L876.7 148.7 L876.7 162.4 L891.6 162.4 L891.6 149.0 L901.8 149.3Z" fill="url(#gv)" stroke="#707070" stroke-width="2" stroke-linejoin="round" />
<path d="M883.8 134.0 L871.0 147.0 L878.5 147.2 L878.5 160.6 L889.8 160.6 L889.8 147.5 L897.4 147.8Z" fill="none" stroke="#c8c8c8" stroke-width="1.2" stroke-linejoin="round" opacity="0.8"/>
<path d="M858.1 187.2 L878.5 176.4 L911.9 178.6 L891.0 189.1Z" fill="#b8b8b8" stroke="#707070" stroke-width="2" stroke-linejoin="round" />
<rect x="926" y="154" width="18" height="2" fill="#d6d6d6"/><rect x="926" y="156" width="16" height="2" fill="#8c8c8c"/><rect x="928" y="158" width="12" height="2" fill="#8c8c8c"/><rect x="930" y="160" width="8" height="2" fill="#8c8c8c"/><rect x="932" y="162" width="4" height="2" fill="#8c8c8c"/>
<path d="M971.7 136.1 L990.8 130.5 L1021.9 138.5 L1021.9 175.6 L995.0 189.3 L962.7 178.6Z" fill="#a6a6a6" stroke="#707070" stroke-width="2" stroke-linejoin="round" />
<path d="M971.7 136.1 L990.8 130.5 L1021.9 138.5 L1014.1 142.1 L990.8 136.7 L980.6 139.1Z" fill="#b4b4b4" stroke="#707070" stroke-width="1.6" stroke-linejoin="round" />
<path d="M971.7 136.1 L980.6 139.1 L975.9 171.4 L962.7 178.6Z" fill="#a2a2a2" stroke="#707070" stroke-width="1.6" stroke-linejoin="round" />
<path d="M1014.1 142.1 L1021.9 138.5 L1021.9 175.6 L995.0 189.3 L996.2 178.0 L1011.1 170.2Z" fill="#9a9a9a" stroke="#707070" stroke-width="1.6" stroke-linejoin="round" />
<path d="M962.7 178.6 L975.9 171.4 L996.2 178.0 L995.0 189.3Z" fill="#acacac" stroke="#707070" stroke-width="1.6" stroke-linejoin="round" />
<path d="M980.6 139.1 L990.8 136.7 L990.8 166.0 L975.9 171.4Z" fill="#b0b0b0" stroke="#707070" stroke-width="1.6" stroke-linejoin="round" />
<path d="M990.8 136.7 L1014.1 142.1 L1011.1 170.2 L990.8 166.0Z" fill="url(#gv)" stroke="#707070" stroke-width="1.6" stroke-linejoin="round" />
<path d="M990.8 166.0 L1011.1 170.2 L996.2 178.0 L975.9 171.4Z" fill="#c0c0c0" stroke="#707070" stroke-width="1.6" stroke-linejoin="round" />
<path d="M1046.6 135.0 L1059.9 132.0 L1099.5 136.9 L1091.5 140.8Z" fill="#3465a4" stroke="#0b1521" stroke-width="2" stroke-linejoin="round" />
<path d="M1091.5 140.8 L1099.5 136.9 L1099.5 174.5 L1091.5 179.3Z" fill="#3b6db3" stroke="#0b1521" stroke-width="2" stroke-linejoin="round" />
<path d="M1046.6 135.0 L1091.5 140.8 L1091.5 179.3 L1046.6 172.9Z" fill="#5b8dcb" stroke="#0b1521" stroke-width="2" stroke-linejoin="round" />
<path d="M1048.8 137.6 L1089.3 142.8 L1089.3 176.8 L1048.8 171.0Z" fill="none" stroke="#7fa9da" stroke-width="1.2" stroke-linejoin="round" opacity="0.6"/>
<path d="M1059.4 143 L1087.7 147.3 L1087.7 158 L1082 157.2 M1087.7 147.3 L1079.2 151.5 M1082 162 L1080 171 L1074 172" fill="none" stroke="#10294d" stroke-width="1" stroke-dasharray="2 1.6"/>
<path d="M1052.5 147.0 L1056.5 145.0 L1082.5 149.0 L1079.2 151.5Z" fill="#888a85" stroke="#2e3436" stroke-width="1" stroke-linejoin="round" />
<path d="M1079.2 151.5 L1082.5 149.0 L1082.5 158.2 L1079.2 160.6Z" fill="#d3d7cf" stroke="#2e3436" stroke-width="1" stroke-linejoin="round" />
<path d="M1063.0 162.4 L1067.0 160.4 L1077.0 161.6 L1073.8 164.2Z" fill="#888a85" stroke="#2e3436" stroke-width="1" stroke-linejoin="round" />
<path d="M1073.8 164.2 L1077.0 161.6 L1077.0 169.4 L1073.8 172.5Z" fill="#d3d7cf" stroke="#2e3436" stroke-width="1" stroke-linejoin="round" />
<path d="M1062.1 184.2 L1066.0 180.4 L1066.0 174.0 L1062.1 174.0Z" fill="#babdb6" stroke="#2e3436" stroke-width="1" stroke-linejoin="round" />
<g transform="matrix(1.07,0.165,0,1,1050.2,179.8)" font-family="Liberation Sans, sans-serif" font-weight="bold" font-size="42">
<text x="0" y="0" fill="#17230b" stroke="#17230b" stroke-width="5.2" stroke-linejoin="miter">F</text>
<text x="0" y="0" fill="#79d81b" stroke="#79d81b" stroke-width="1.0" stroke-linejoin="miter">F</text>
</g>
<path d="M1122.5 140.3 L1150.8 134.4 L1181.3 139.2 L1156.7 146.2Z" fill="#a6a6a6" stroke="#7a7a7a" stroke-width="2" stroke-linejoin="round" />
<path d="M1122.5 140.3 L1156.7 146.2 L1156.7 185.2 L1122.5 178.8Z" fill="url(#cubl)" stroke="#7a7a7a" stroke-width="2" stroke-linejoin="round" />
<path d="M1156.7 146.2 L1181.3 139.2 L1181.3 174.5 L1156.7 185.2Z" fill="url(#cubr)" stroke="#7a7a7a" stroke-width="2" stroke-linejoin="round" />
<path d="M1124.7 143.0 L1154.6 148.2 L1154.6 182.5 L1124.7 176.8Z" fill="none" stroke="#c8c8c8" stroke-width="1.2" stroke-linejoin="round" opacity="0.7"/>
<path d="M1158.9 148.0 L1179.1 142.2 L1179.1 173.0 L1158.9 181.8Z" fill="none" stroke="#e8e8e8" stroke-width="1.2" stroke-linejoin="round" opacity="0.7"/>
<defs><linearGradient id="cubl" gradientUnits="userSpaceOnUse" x1="1125" y1="142" x2="1150" y2="185"><stop offset="0" stop-color="#c2c2c2"/><stop offset="1" stop-color="#9c9c9c"/></linearGradient><linearGradient id="cubr" gradientUnits="userSpaceOnUse" x1="1160" y1="145" x2="1180" y2="180"><stop offset="0" stop-color="#c8c8c8"/><stop offset="1" stop-color="#dcdcdc"/></linearGradient></defs>
<rect x="1207.9" y="146.1" width="2" height="2" fill="#a2a2a2"/><rect x="1214.4" y="146.1" width="2" height="2" fill="#a2a2a2"/><rect x="1207.9" y="151.8" width="2" height="2" fill="#a2a2a2"/><rect x="1214.4" y="151.8" width="2" height="2" fill="#a2a2a2"/><rect x="1207.9" y="157.4" width="2" height="2" fill="#a2a2a2"/><rect x="1214.4" y="157.4" width="2" height="2" fill="#a2a2a2"/><rect x="1207.9" y="163.1" width="2" height="2" fill="#a2a2a2"/><rect x="1214.4" y="163.1" width="2" height="2" fill="#a2a2a2"/><rect x="1207.9" y="168.7" width="2" height="2" fill="#a2a2a2"/><rect x="1214.4" y="168.7" width="2" height="2" fill="#a2a2a2"/><rect x="1207.9" y="174.4" width="2" height="2" fill="#a2a2a2"/><rect x="1214.4" y="174.4" width="2" height="2" fill="#a2a2a2"/>
<path d="M1239.2 136.5 L1230 136.5 L1230 182.7 L1239.2 182.7" fill="none" stroke="#ffffff" stroke-width="5.4" stroke-linecap="round" stroke-linejoin="round" opacity="0.9"/>
<path d="M1239.2 136.5 L1230 136.5 L1230 182.7 L1239.2 182.7" fill="none" stroke="#0a0a0a" stroke-width="2.6" stroke-linecap="round" stroke-linejoin="round"/>
<path d="M1276.9 136.5 L1286.1 136.5 L1286.1 182.7 L1276.9 182.7" fill="none" stroke="#ffffff" stroke-width="5.4" stroke-linecap="round" stroke-linejoin="round" opacity="0.9"/>
<path d="M1276.9 136.5 L1286.1 136.5 L1286.1 182.7 L1276.9 182.7" fill="none" stroke="#0a0a0a" stroke-width="2.6" stroke-linecap="round" stroke-linejoin="round"/>
<path d="M1234.6 145.8 L1257.1 140.5 L1281.5 143.8 L1261.7 149.7Z" fill="#6393cf" stroke="#0b1521" stroke-width="2" stroke-linejoin="round" />
<path d="M1234.6 145.8 L1261.7 149.7 L1261.7 180.8 L1234.6 176.1Z" fill="url(#bv)" stroke="#0b1521" stroke-width="2" stroke-linejoin="round" />
<path d="M1261.7 149.7 L1281.5 143.8 L1281.5 172.8 L1261.7 180.8Z" fill="url(#bdd)" stroke="#0b1521" stroke-width="2" stroke-linejoin="round" />
<path d="M1236.8 148.4 L1259.6 151.6 L1259.6 178.2 L1236.8 174.2Z" fill="none" stroke="#86afde" stroke-width="1.1" stroke-linejoin="round" opacity="0.6"/>
<rect x="1298" y="154" width="18" height="2" fill="#d6d6d6"/><rect x="1298" y="156" width="16" height="2" fill="#8c8c8c"/><rect x="1300" y="158" width="12" height="2" fill="#8c8c8c"/><rect x="1302" y="160" width="8" height="2" fill="#8c8c8c"/><rect x="1304" y="162" width="4" height="2" fill="#8c8c8c"/>
<circle cx="1372.7" cy="153.7" r="18.5" fill="url(#bd)" stroke="#0b1521" stroke-width="2"/>
<circle cx="1372.7" cy="153.7" r="16.6" fill="none" stroke="#86afde" stroke-width="1.2" opacity="0.7"/>
<circle cx="1353.5" cy="167.9" r="18.5" fill="url(#sph)" stroke="#0b1521" stroke-width="2"/>
<circle cx="1353.5" cy="167.9" r="16.6" fill="none" stroke="#6f9fda" stroke-width="1.2" opacity="0.8"/>
<circle cx="1433.5" cy="167.8" r="18.4" fill="url(#gd)" stroke="#707070" stroke-width="2"/>
<circle cx="1433.5" cy="167.8" r="16.5" fill="none" stroke="#c4c4c4" stroke-width="1.2" opacity="0.8"/>
<circle cx="1452.6" cy="153.5" r="18.4" fill="url(#gw)" stroke="#707070" stroke-width="2"/>
<circle cx="1513.5" cy="167.8" r="18.4" fill="#aeaeae" stroke="#707070" stroke-width="2"/>
<circle cx="1532.6" cy="153.5" r="18.4" fill="#aeaeae" stroke="#707070" stroke-width="2"/>
<circle cx="1513.5" cy="167.8" r="17.4" fill="url(#fu1)"/>
<circle cx="1532.6" cy="153.5" r="17.4" fill="url(#fu2)"/>
<path d="M1517.5 150.5 L1529.5 167" stroke="#c8c8c8" stroke-width="2.4" stroke-linecap="round" opacity="0.8"/>
<defs><linearGradient id="fu1" gradientUnits="userSpaceOnUse" x1="1496" y1="138" x2="1550" y2="186"><stop offset="0" stop-color="#b6b6b6"/><stop offset="1" stop-color="#a4a4a4"/></linearGradient><linearGradient id="fu2" gradientUnits="userSpaceOnUse" x1="1496" y1="138" x2="1550" y2="186"><stop offset="0" stop-color="#b6b6b6"/><stop offset="1" stop-color="#a4a4a4"/></linearGradient></defs>
<circle cx="1593.6" cy="167.8" r="18.4" fill="url(#gw)" stroke="#707070" stroke-width="2"/>
</svg><svg width="130" height="40" viewBox="80 262 130 40" style="left:80px;top:262px"><rect x="87.6" y="271.7" width="20.6" height="20.4" fill="none" stroke="#7a7a7a" stroke-width="3.3"/><rect x="87.6" y="277.2" width="20.6" height="2" fill="#6a6a6a"/><rect x="139" y="271.7" width="13" height="12.9" fill="none" stroke="#7a7a7a" stroke-width="3"/><rect x="131.9" y="279.1" width="12.5" height="13" fill="#f0f0f0" stroke="#7a7a7a" stroke-width="3"/><path d="M176 272.3 L196.2 292 M196.2 272.3 L176 292" stroke="#484848" stroke-width="4.6" fill="none"/></svg>
</body></html>
